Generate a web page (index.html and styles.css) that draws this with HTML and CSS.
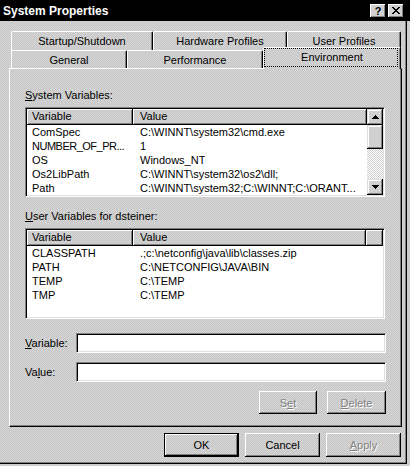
FILE: index.html
```html
<!DOCTYPE html>
<html>
<head>
<meta charset="utf-8">
<title>System Properties</title>
<link rel="stylesheet" href="styles.css">
</head>
<body>
<div class="titlebar">
  <span class="title-text">System Properties</span>
  <div class="tbtns">
    <div class="tbtn help">?</div>
    <div class="tbtn close">
      <svg width="8" height="7" viewBox="0 0 8 7"><path d="M0 0h2v1h1v1h2V1h1V0h2v1H7v1H6v1H5v1h1v1h1v1h1v1H6V6H5V5H3v1H2v1H0V6h1V5h1V4h1V3H2V2H1V1H0z" fill="#000"/></svg>
    </div>
  </div>
</div>
<div class="client">
  <div class="tabs">
    <div class="tabrow back">
      <div class="tab t-startup">Startup/Shutdown</div>
      <div class="tab t-hw">Hardware Profiles</div>
      <div class="tab t-up">User Profiles</div>
    </div>
    <div class="tabrow front">
      <div class="tab t-gen">General</div>
      <div class="tab t-perf">Performance</div>
      <div class="tab t-env sel">Environment</div>
    </div>
  </div>
  <div class="panel">
    <div class="label"><u>S</u>ystem Variables:</div>
    <div class="list sys">
      <div class="list-main">
        <div class="hdr">
          <div class="hc hc1">Variable</div>
          <div class="hc hc2">Value</div>
        </div>
        <div class="row"><span class="c1">ComSpec</span><span class="c2">C:\WINNT\system32\cmd.exe</span></div>
        <div class="row"><span class="c1 tight">NUMBER_OF_PR...</span><span class="c2">1</span></div>
        <div class="row"><span class="c1">OS</span><span class="c2">Windows_NT</span></div>
        <div class="row"><span class="c1">Os2LibPath</span><span class="c2">C:\WINNT\system32\os2\dll;</span></div>
        <div class="row"><span class="c1">Path</span><span class="c2">C:\WINNT\system32;C:\WINNT;C:\ORANT...</span></div>
      </div>
      <div class="vscroll">
        <div class="sbtn"><svg width="7" height="4" viewBox="0 0 7 4"><path d="M3 0h1v1h1v1h1v1h1v1H0V3h1V2h1V1h1z" fill="#000"/></svg></div>
        <div class="thumb"></div>
        <div class="track"></div>
        <div class="sbtn"><svg width="7" height="4" viewBox="0 0 7 4"><path d="M0 0h7v1H6v1H5v1H4v1H3V3H2V2H1V1H0z" fill="#000"/></svg></div>
      </div>
    </div>

    <div class="label user-label"><u>U</u>ser Variables for dsteiner:</div>
    <div class="list user">
      <div class="hdr">
        <div class="hc hc1">Variable</div>
        <div class="hc hc2u">Value</div>
        <div class="hc hc3"></div>
      </div>
      <div class="row"><span class="c1">CLASSPATH</span><span class="c2">.;c:\netconfig\java\lib\classes.zip</span></div>
      <div class="row"><span class="c1">PATH</span><span class="c2">C:\NETCONFIG\JAVA\BIN</span></div>
      <div class="row"><span class="c1">TEMP</span><span class="c2">C:\TEMP</span></div>
      <div class="row"><span class="c1">TMP</span><span class="c2">C:\TEMP</span></div>
    </div>

    <div class="field first">
      <div class="field-label"><u>V</u>ariable:</div>
      <div class="input"></div>
    </div>
    <div class="field">
      <div class="field-label">Va<u>l</u>ue:</div>
      <div class="input"></div>
    </div>
    <div class="panel-btns">
      <div class="btn small disabled">S<u>e</u>t</div>
      <div class="btn small wide disabled"><u>D</u>elete</div>
    </div>
  </div>
  <div class="dlg-btns">
    <div class="btn default">OK</div>
    <div class="btn">Cancel</div>
    <div class="btn disabled"><u>A</u>pply</div>
  </div>
</div>
</body>
</html>
```
FILE: styles.css
```css
* { box-sizing: border-box; }

html, body {
  margin: 0;
  padding: 0;
}

body {
  width: 410px;
  height: 466px;
  overflow: hidden;
  font-family: "Liberation Sans", Arial, sans-serif;
  font-size: 11px;
  color: #000;
  background: repeating-conic-gradient(#c6c6c6 0 25%, #d6d6d6 0 50%) 0 0 / 2px 2px;
}

/* ---------- title bar ---------- */
.titlebar {
  height: 21px;
  background: #000;
  color: #fff;
  display: flex;
  align-items: center;
  padding: 0 6px 0 3px;
}

.title-text {
  flex: 1;
  font-weight: bold;
  font-size: 12px;
  padding-top: 1px;
}

.tbtns {
  display: flex;
  gap: 2px;
}

.tbtn {
  width: 16px;
  height: 14px;
  background: #d0d0d0;
  box-shadow: inset -1px -1px #000, inset 1px 1px #fff, inset -2px -2px #808080;
  display: flex;
  align-items: center;
  justify-content: center;
  color: #000;
  font-weight: bold;
  font-size: 11px;
  line-height: 14px;
}

.tbtn.close svg { display: block; }

/* ---------- client area ---------- */
.client {
  width: 407px;
  height: 443px;
  border-right: 1px solid #000;
  border-bottom: 1px solid #000;
  box-shadow: inset -1px -1px #808080;
  padding: 10px 4px 0 9px;
  background: repeating-conic-gradient(#c6c6c6 0 25%, #d6d6d6 0 50%) 0 0 / 2px 2px;
}

/* ---------- tabs ---------- */
.tabs {
  margin-left: 2px;
}

.tabrow {
  display: flex;
}

.tabrow.back {
  height: 20px;
}

.tabrow.front {
  height: 21px;
  margin-top: -4px;
  align-items: flex-end;
  position: relative;
  z-index: 1;
}

.tab {
  height: 18px;
  border-top: 1px solid #fff;
  border-left: 1px solid #fff;
  border-right: 1px solid #000;
  border-radius: 2px 2px 0 0;
  box-shadow: inset -1px 0 #808080;
  display: flex;
  align-items: center;
  justify-content: center;
  background: repeating-conic-gradient(#c6c6c6 0 25%, #d6d6d6 0 50%) 0 0 / 2px 2px;
  white-space: nowrap;
}

.tabrow.back .tab {
  height: 20px;
  align-items: flex-start;
  padding-top: 3px;
}

.t-startup { width: 142px; }
.t-hw { width: 134px; }
.t-up { width: 114px; }
.t-gen { width: 116px; }
.t-perf { width: 136px; }
.t-env { width: 138px; }

.tab.sel {
  height: 22px;
  margin-bottom: -1px;
  position: relative;
  padding-bottom: 3px;
}

.tab.sel::after {
  content: "";
  position: absolute;
  left: 0;
  top: 0;
  right: 2px;
  bottom: 2px;
  border: 1px dotted #000;
}

/* ---------- panel ---------- */
.panel {
  width: 393px;
  height: 359px;
  border-top: 1px solid #fff;
  border-left: 1px solid #fff;
  border-right: 1px solid #000;
  border-bottom: 1px solid #000;
  box-shadow: inset -1px -1px #808080;
  padding: 20px 15px 0 15px;
  display: flex;
  flex-direction: column;
}

.label {
  height: 13px;
  line-height: 13px;
  white-space: nowrap;
}

.user-label {
  margin-top: 13px;
}

/* ---------- list views ---------- */
.list {
  width: 360px;
  margin-top: 5px;
  background: #fff;
  padding: 1px;
  border-top: 1px solid #808080;
  border-left: 1px solid #808080;
  border-right: 1px solid #fff;
  border-bottom: 1px solid #fff;
  box-shadow: inset 1px 1px #000, inset -1px -1px #dfdfdf;
}

.list.sys {
  height: 90px;
  display: flex;
}

.list.user {
  height: 91px;
}

.list-main {
  flex: 1;
  min-width: 0;
}

.hdr {
  display: flex;
  height: 16px;
}

.hc {
  height: 16px;
  line-height: 15px;
  background: repeating-conic-gradient(#c6c6c6 0 25%, #d6d6d6 0 50%) 0 0 / 2px 2px;
  box-shadow: inset -1px -1px #000, inset 1px 1px #fff, inset -2px -2px #808080;
  white-space: nowrap;
}

.hc1 { width: 106px; padding-left: 5px; }
.hc2 { flex: 1; padding-left: 7px; }
.hc2u { width: 233px; padding-left: 7px; }
.hc3 { flex: 1; }

.row {
  display: flex;
  height: 14px;
  line-height: 14px;
  white-space: nowrap;
}

.c1 {
  width: 106px;
  flex: none;
  padding-left: 5px;
  overflow: hidden;
}

.c2 {
  padding-left: 7px;
  overflow: hidden;
}

.tight { letter-spacing: -0.5px; }

/* ---------- scrollbar ---------- */
.vscroll {
  width: 16px;
  display: flex;
  flex-direction: column;
}

.sbtn, .thumb {
  background: #d0d0d0;
  box-shadow: inset -1px -1px #000, inset 1px 1px #dfdfdf, inset -2px -2px #808080, inset 2px 2px #fff;
}

.sbtn {
  height: 16px;
  display: flex;
  align-items: center;
  justify-content: center;
}

.sbtn svg { display: block; }

.thumb {
  height: 24px;
}

.track {
  flex: 1;
  background: repeating-conic-gradient(#ffffff 0 25%, #cfcfcf 0 50%) 0 0 / 2px 2px;
}

/* ---------- edit fields ---------- */
.field {
  display: flex;
  align-items: center;
  height: 20px;
  margin-top: 9px;
}

.field.first {
  margin-top: 14px;
}

.field-label {
  width: 51px;
  white-space: nowrap;
}

.input {
  flex: 1;
  height: 20px;
  background: #fff;
  border-top: 1px solid #808080;
  border-left: 1px solid #808080;
  border-right: 1px solid #fff;
  border-bottom: 1px solid #fff;
  box-shadow: inset 1px 1px #000, inset -1px -1px #dfdfdf;
}

/* ---------- buttons ---------- */
.panel-btns {
  display: flex;
  justify-content: flex-end;
  gap: 10px;
  margin-top: 9px;
}

.btn {
  width: 75px;
  height: 24px;
  background: repeating-conic-gradient(#c6c6c6 0 25%, #d6d6d6 0 50%) 0 0 / 2px 2px;
  box-shadow: inset -1px -1px #000, inset 1px 1px #fff, inset -2px -2px #808080;
  display: flex;
  align-items: center;
  justify-content: center;
  white-space: nowrap;
}

.btn.small {
  width: 58px;
  height: 23px;
}

.btn.small.wide {
  width: 59px;
}

.btn.default {
  border: 1px solid #000;
}

.btn.disabled {
  color: #808080;
  text-shadow: 1px 1px 0 #fff;
}

.dlg-btns {
  display: flex;
  justify-content: flex-end;
  gap: 6px;
  margin-top: 6px;
  margin-right: 1px;
}
```
